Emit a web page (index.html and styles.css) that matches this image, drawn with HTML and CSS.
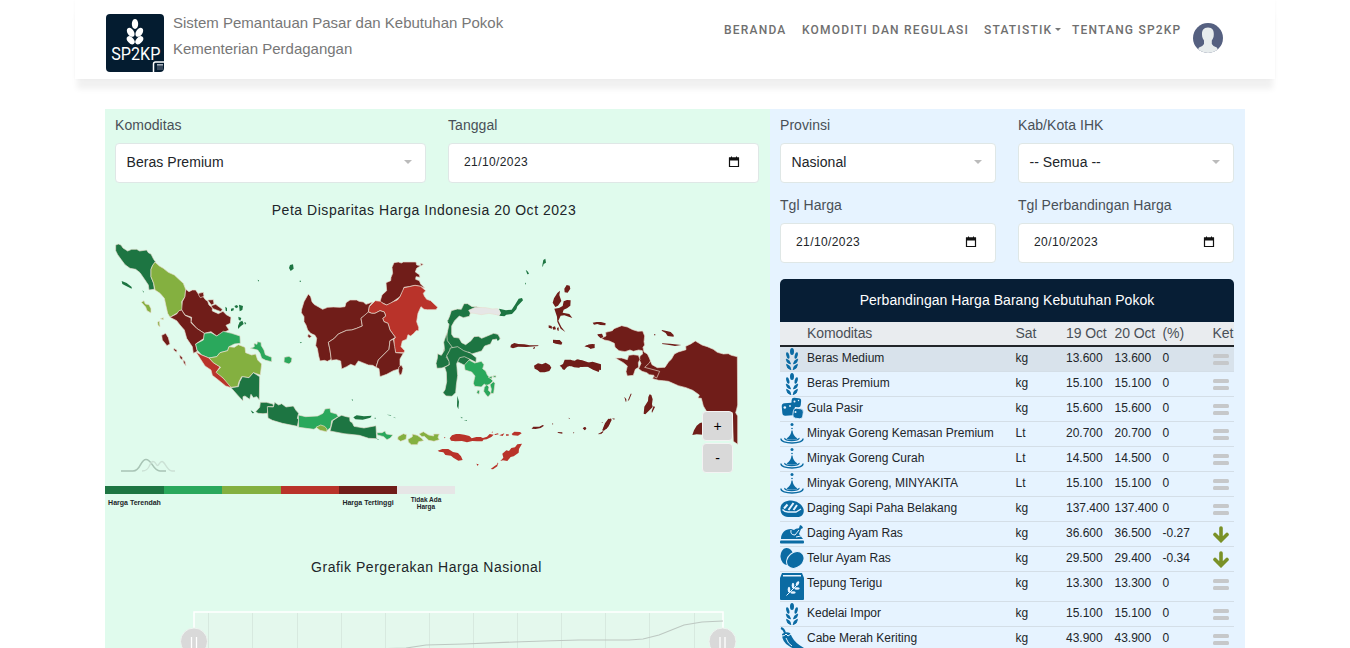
FILE: index.html
```html
<!DOCTYPE html>
<html lang="id">
<head>
<meta charset="utf-8">
<title>SP2KP - Sistem Pemantauan Pasar dan Kebutuhan Pokok</title>
<link rel="stylesheet" href="styles.css">
</head>
<body>
<svg class="defs" width="0" height="0">
  <defs>
    <symbol id="wheat" viewBox="0 0 24 24"><g fill="#0b6ba3"><ellipse cx="12" cy="4.500" rx="2" ry="3.500"/><ellipse cx="7.800" cy="8.500" rx="1.500" ry="3.300" transform="rotate(-14 7.800 8.500)"/><ellipse cx="16.200" cy="8.500" rx="1.500" ry="3.300" transform="rotate(14 16.200 8.500)"/><path d="M6.200 12q4 1 4.300 5-4-.5-4.300-5zM17.800 12q-4 1-4.300 5 4-.5 4.300-5zM6.500 17.300q4 .8 4.400 5.400-4.200-.8-4.400-5.400zM17.500 17.300q-4 .8-4.400 5.400 4.200-.8 4.400-5.400z" stroke="#0b6ba3" stroke-width=".8" stroke-linejoin="round"/></g></symbol>
    <symbol id="sugar" viewBox="0 0 24 24"><g fill="#0b6ba3"><rect x="11.500" y="1" width="9.500" height="9" rx="2.500" transform="rotate(5 16 5)"/><rect x="2" y="6" width="13" height="12.500" rx="3" transform="rotate(-5 8 12)"/><rect x="13" y="11.500" width="10" height="10" rx="3" transform="rotate(8 18 17)" stroke="#e6f3ff" stroke-width=".8"/></g><g fill="#e6f3ff"><circle cx="4.800" cy="10.500" r="1.300"/><circle cx="10" cy="9" r=".9"/><circle cx="14.500" cy="4.500" r="1"/><circle cx="18.500" cy="3.500" r=".7"/><circle cx="15.500" cy="15" r="1"/></g></symbol>
    <symbol id="oil" viewBox="0 0 24 24"><g fill="#0b6ba3"><circle cx="12" cy="2.500" r="1.500"/><circle cx="12" cy="6.500" r=".8"/><path d="M11.500 8.500h1q.5 5.500 5 8-1.500 1.200-5.500 1.200t-5.500-1.200q4.500-2.500 5-8z"/></g><path d="M5 16c-2 3.500 15 3.500 14 0M1 16.500c-1 6 23 6 22 0" fill="none" stroke="#0b6ba3" stroke-width="1.300"/></symbol>
    <symbol id="meat" viewBox="0 0 24 24"><path fill="#0b6ba3" d="M.5 12C0 6 6 3.500 11 3.500S22 7 23.500 12c1 4-1 8-6 8H8C3 19.500 .5 17 .5 12z"/><path d="M2.500 12.500q2 2.500 5.500 2.500h8l5-3" fill="none" stroke="#e6f3ff" stroke-width="1.300"/><path d="M4 11.500l3.500-4M8.500 13l5-7M13.500 13l3.500-5" fill="none" stroke="#e6f3ff" stroke-width="2"/></symbol>
    <symbol id="chicken" viewBox="0 0 24 24"><g fill="#0b6ba3"><path d="M1 17C1 11 5 7 11 7l3 1c2-2 4-1 5-2l1-3 2 1 1 2-2 1-2 5 4 5z"/><rect x="0" y="18.500" width="24" height="3" rx="1"/></g><path d="M11 8q-1 5 4 5l4-5M16 15l5-1" fill="none" stroke="#e6f3ff" stroke-width="1"/></symbol>
    <symbol id="egg" viewBox="0 0 24 24"><ellipse cx="7" cy="9.500" rx="6.500" ry="8.500" transform="rotate(-5 7 9.500)" fill="#0b6ba3"/><ellipse cx="15.300" cy="13" rx="7.500" ry="9.500" transform="rotate(50 15.300 13)" fill="#0b6ba3" stroke="#e6f3ff"/></symbol>
    <symbol id="flour" viewBox="0 0 24 29"><path fill="#0b6ba3" d="M2 1h20l2 5v21q0 1-1 1H1q-1 0-1-1V6z"/><rect x="3" y="3" width="18" height="1.500" fill="#e6f3ff"/><path d="M6.500 23.500L18 12" stroke="#e6f3ff"/><g fill="#e6f3ff"><ellipse cx="17.500" cy="11.500" rx="1.400" ry="2.500" transform="rotate(30 17.500 11.500)"/><ellipse cx="13" cy="13.500" rx="1.300" ry="2.700"/><ellipse cx="17" cy="16.500" rx="2.700" ry="1.300"/><ellipse cx="9" cy="17.500" rx="1.300" ry="2.700"/><ellipse cx="13" cy="20.500" rx="2.700" ry="1.300"/></g></symbol>
    <symbol id="chili" viewBox="0 0 24 24"><path d="M1 1q3 1 4 5" fill="none" stroke="#0b6ba3" stroke-width="2"/><path d="M2 7q4-3 8-1l2 4q3 6 12 11-8 3-15-2Q2 15 2 7z" fill="#0b6ba3"/><path d="M2 9q3 0 4-2l2 2 3-2M6 11q2 6 6 8" fill="none" stroke="#e6f3ff"/></symbol>
    <symbol id="same" viewBox="0 0 16 12"><rect width="16" height="4" rx="1.500" fill="#c6c8ca"/><rect y="7" width="16" height="4" rx="1.500" fill="#c6c8ca"/></symbol>
    <symbol id="down" viewBox="0 0 16 17"><path d="M8 2v12M2 8.500l6 6 6-6" fill="none" stroke="#7a9127" stroke-width="3.600" stroke-linecap="round"/></symbol>
    <symbol id="cal" viewBox="0 0 12 12"><path d="M1.500 2h9v8.500h-9z" fill="none" stroke="#111" stroke-width="1.200"/><path d="M1 1.500h10v3H1zM3 .5h1v2H3zM8 .5h1v2H8z" fill="#111"/></symbol>
  </defs>
</svg>

<header class="topbar">
  <div class="brand">
    <svg class="logo" viewBox="0 0 58 58"><rect width="58" height="58" rx="4" fill="#041c30"/><g fill="#fff"><ellipse cx="29" cy="10" rx="3.200" ry="5"/><ellipse cx="24.700" cy="18.300" rx="3.200" ry="5" transform="rotate(-35 24.700 18.300)"/><ellipse cx="33.300" cy="18.300" rx="3.200" ry="5" transform="rotate(35 33.300 18.300)"/><ellipse cx="24.700" cy="26.200" rx="3" ry="4.800" transform="rotate(-42 24.700 26.200)"/><ellipse cx="33.300" cy="26.200" rx="3" ry="4.800" transform="rotate(42 33.300 26.200)"/></g><text x="5.300" y="46" textLength="49" lengthAdjust="spacingAndGlyphs" class="logo-text">SP2KP</text><path d="M47.500 58v-8q0-2 2-2H58" fill="#041c30" stroke="#fff" stroke-width="1.500"/><path d="M51 50h6v6h-6z" fill="#36475a"/><path d="M51 50h6v1.500h-6z" fill="#a6b0bb"/></svg>
    <div class="brand-name"><div>Sistem Pemantauan Pasar dan Kebutuhan Pokok</div><div>Kementerian Perdagangan</div></div>
  </div>
  <nav class="nav">
    <a class="n1">BERANDA</a><a class="n2">KOMODITI DAN REGULASI</a><a class="n3">STATISTIK<i class="caret"></i></a><a class="n4">TENTANG SP2KP</a>
    <svg class="avatar" viewBox="0 0 30 30"><clipPath id="round"><circle cx="15" cy="15" r="15"/></clipPath><g clip-path="url(#round)"><rect width="30" height="30" fill="#556080"/><path d="M15 4.500c4.500 0 6 3 5.800 7 0 3-1 4.500-2 6v3.500q1 2 5 3.500l3 5.500H3l3-5.500q4-1.500 5-3.500v-3.500c-1-1.500-2-3-2-6-.2-4 1.500-7 6-7z" fill="#e7eced"/></g></svg>
  </nav>
</header>

<main class="panels">
  <section class="left">
    <div class="filters">
      <label class="field">Komoditas<span class="control">Beras Premium<i class="arrow"></i></span></label>
      <label class="field">Tanggal<span class="control date">21/10/2023<svg class="cal"><use href="#cal"/></svg></span></label>
    </div>
    <h2 class="title map-title">Peta Disparitas Harga Indonesia 20 Oct 2023</h2>
    <div class="map-wrap">
      <svg class="map" viewBox="105 230 665 255">
        <g class="land" transform="translate(105 230) scale(.33333)">
          <path class="c1" d="M32 45L40 42 48 45 54 54 68 63 80 58 95 58 104 63 125 60 130 68 138 72 146 88 152 96 143 106 138 118 138 140 146 160 148 178 132 180 130 165 120 150 105 128 92 118 75 115 60 104 48 88 38 74 32 62z"/>
          <path class="c3" d="M150 96L163 108 175 115 190 127 208 135 224 150 235 160 242 178 240 200 230 215 233 238 215 250 195 262 188 250 183 228 178 205 165 190 150 180 146 160 138 140 138 118 143 106z"/>
          <path class="c5" d="M242 178L252 185 262 180 272 180 280 192 293 197 300 208 308 214 312 225 322 233 322 243 340 251 354 244 364 254 378 262 376 280 363 286 372 300 355 308 335 318 318 305 298 310 275 295 258 275 260 262 240 255 230 240 232 215 240 200z"/>
          <path class="c5" d="M195 262L215 252 222 242 230 240 240 256 258 264 258 278 275 295 298 310 297 325 272 342 277 364 265 370 262 350 245 325 238 300 225 285 215 272z"/>
          <path class="c2" d="M298 310L318 308 335 318 355 304 380 310 405 318 406 340 388 342 372 350 368 362 345 368 335 380 312 384 290 375 276 360 272 342 295 330z"/>
          <path class="c4" d="M273 366L290 375 312 384 325 398 345 410 335 425 355 445 375 462 378 473 362 468 340 450 322 436 318 420 300 408 285 385z"/>
          <path class="c3" d="M312 384L335 380 345 368 368 362 372 350 388 352 400 344 420 352 422 368 440 375 452 372 458 390 470 402 466 435 445 428 432 443 410 440 402 455 398 470 378 472 355 445 333 427 347 412 325 398z"/>
          <path class="c1" d="M378 473L400 470 404 455 412 440 432 443 445 428 464 440 463 510 455 500 445 503 438 493 434 508 420 498 414 500 414 513 400 498z"/>
          <path class="c2" d="M436 355L448 350 447 340 456 343 457 335 468 337 469 347 477 360 481 374 500 382 500 395 482 391 470 385 465 370 458 360z"/>
          <path class="c5" d="M281 190l14-3 2 12-11 4-5-8zM308 210l17-1 2 12-8 4zM318 227l14-4 20 15-4 7-24-9zM170 316l12-6 8 13 5 19-9 5-14-17zM207 355l9 6-2 6-8-7zM224 375l8 7v8l-7-5zM234 390l6 4 3 13-7-8z"/>
          <path class="c3" d="M109 217l8-5 4 10 11 2 6 12 0 13-12-7-4-11zM158 276l5-3 2 18-6-5zM166 266l9-3v6z"/>
          <path class="c1 isle" d="M50 153l15 6 15 12v5l-18-9-10-5zM111 181l6 4v3zM361 230l5 4v10l-4-2zM378 236l8-2v7l-8 3zM388 228l8-3 4 6-7 4zM402 224l12 4-2 12-8 4zM400 260l9 4-3 8-5-3zM404 276l8-4 4 10-9 7-8 8v-9zM418 276l6 3-4 5zM458 149l4 2-2 4zM437 541l5 3 6 5-6 1z"/>
        </g>
        <g class="land" transform="translate(230 310) scale(.33333)">
          <path class="c1" d="M77 305l12-13 2-15 18 0 20 5 2 8-17 0-2 20-13 1-15-1z"/>
          <path class="c1" d="M112 290l18 1 4-14 12 8 9-4 13 10 22-3 8 13 8 9-4 15 4 4-4 20-45-9-30-9-13-7z"/>
          <path class="c2" d="M205 315l22 5 36-2 16-8 6-13 15-2 2 12 18 5 5 8-20 12-3 20-13 12-9-4-4-7-14-2-10 7-46-6z"/><path class="c3" d="M258 352l14-7 12 4 7 8-1 8-20-4z"/>
          <path class="c1" d="M302 356l6-24 18-12 9-4 14 4 10 2 1 12 7 4 5 11 30 5 36-7 2 39-24-1-28-9-46-5-42-8z"/>
          <path class="c1 isle" d="M370 322l10-6 22 3 23-2-4 6-23 6-22-1zM365 268l4 1-2 4zM434 323h3v3h-3zM437 385l8 3 2 3zM470 314l12 1 2 2zM488 320l8 3v2z"/>
          <path class="c2" d="M441 368l15 0 9-5 4 9 20 3-9 10-9 4-10-9-19-5zM163 142l14-3 9 6-2 11-7 6-15-5z"/>
          <path class="c3" d="M504 380l16-9 10 3-2 14-16 6-9-6zM534 388l13-8 0-8 15 4 13 9 6 7-15 3-4 9-18 0-9-8zM567 372l13-7 16 10 15 3 0-6 17 0-4 10 4 7-16 5-16-3-13-12-7 1z"/>
        </g>
        <g class="land" transform="translate(290 250) scale(.33333)">
          <path class="c5" d="M55 132L62 140 66 155 72 163 86 171 98 178 113 172 130 171 150 172 165 170 168 158 180 150 200 150 207 154 220 156 228 163 248 156 238 168 235 188 213 205 217 228 200 235 185 240 170 241 145 252 133 265 115 277 120 300 124 328 112 334 103 331 90 333 86 318 82 295 77 287 80 265 75 256 62 250 53 240 48 225 42 215 42 200 34 188 35 178 42 155z"/>
          <path class="c5" d="M312 38L325 36 334 39 340 36 378 36 380 45 392 47 380 55 376 66 388 74 390 82 378 80 377 88 388 92 392 102 404 114 390 109 375 106 358 110 342 112 340 122 330 140 312 153 300 162 290 165 270 155 276 135 290 122 288 98 302 92 303 82 308 70 306 52z"/>
          <path class="c4" d="M235 185L238 170 256 152 272 154 278 160 290 165 312 154 322 150 330 140 342 113 358 110 375 106 392 109 407 122 400 130 403 138 410 148 422 152 443 172 438 179 412 179 402 178 393 170 384 190 380 215 386 232 386 242 378 242 372 250 362 258 354 254 350 268 337 273 333 290 344 302 342 308 317 308 312 290 312 268 316 262 300 240 294 220 282 215 278 205 287 198 283 186 270 182 255 190 245 190z"/>
          <path class="c5" d="M124 331L120 300 115 277 133 265 145 252 170 241 185 240 200 235 217 228 213 205 235 186 245 190 255 190 270 182 283 186 287 198 278 205 282 215 294 220 300 240 316 262 300 272 297 298 280 315 265 330 258 352 248 346 235 345 218 338 205 333 195 348 182 343 170 350 155 357 152 333 140 329z"/>
          <path class="c5" d="M258 352L265 330 280 315 297 298 300 272 310 268 314 290 317 308 340 310 330 327 330 345 334 355 310 362 290 373 270 380 267 356z"/>
          <path class="c5" d="M326 352l8-7 5 10-4 17-6 4-3-11zM55 252l10 7-7 5-5-5zM392 40l8 3-7 5z"/><path class="c1 isle" d="M0 45l9-2 2 13-9 7-5-9zM29 92h4v3h-4zM30 276l6 1-4 3z"/>
        </g>
        <g class="land" transform="translate(425 250) scale(.33333)">
          <path class="c1" d="M68 242l4-18-4-12 6-14 5-16 18-5 12 1 8-17 11 0 13 9 14 0 14 5-10 9-22 3-4 12-18 4-12-5-14 14-9 16 0 25 6 9 16 2 8 14 12 6 16-12 9-12 13-1 10 6 24-10 12-5 13 3 7 13-25 3-4 13-18 6-9 15-30 9-9-6-6 8 12 20 18 8 13 26-13-8-18-4-24-13-16-8-10-4-14 4-14-16-4-12z"/>
          <path class="c1" d="M65 250l2 22 15 20-7 16-11 14 11 14-4 10-20 8-15 1-3-15 4-15 1-14 11 5 10-16-3-23z"/>
          <path class="c1" d="M76 294l22-4 18 12 20 7 18 14-1 14-20-10-15-7-14 3-9 18 3 36-4 28-2 23-11 11-18-1-9-10 6-9 5-24-1-28-5-15 14-8-1-10-7-17 9-16z"/>
          <path class="c2" d="M118 345l14-15 17 9 20-5 8 10-4 12 9 7 5 12 17 18-9 9-11 5-6-5-9 9-20-2-4-9 5-22-10-12-20-6z"/>
          <path class="c2" d="M178 412l7-8 7 7-2 10 9 8-10 12-7-8-6-9zM195 404l10-9 5 5-4 30-9 1 2-14zM190 382l12-4-2 9zM205 377h8v5h-8zM158 420l6 2-2 11-7-4z"/>
          <path class="c0" d="M131 181l20-9 32 1 18 4 17-1 6 5 3 17-13-4-22-4-23 4-21-4-12-1z"/>
          <path class="c1 isle" d="M222 176l21 5 17-2 10-15 11-18 10-2 3 7-17 18-3 9-13 14-17 2-6 5-15-2 5-8zM302 59l7 6 3 7-5 1zM355 30l6-4 2 12-7 4-3 10-1-6zM300 98l3 1-2 6zM200 262l12-1-2 5-8 2-5 10-3-5zM215 263h8v7l-6 2zM97 437l5 18-2 23-4-10zM68 210l5 8-4 2z"/>
          <path class="c5 isle" d="M418 116l7-11 9 2 2 9-8 12-9-1zM387 145l10-16 8-7-2 13 6 18-10 14-8 4-8-13zM388 176l14-2 11-6 3-14 10-4 11 1-1 16-10 8-10 4-3 9 20 4 9 12-24-8-11 1-7 15 9 19 12 15-14-10-10-21-1-15zM371 226l9 2 1 8-10-3zM382 232l8-3 3 9-8 1zM396 234l5-2v11l-4-2zM384 269l12 1 8 0 8 8-3 6-17-3-8-3zM258 284l10-5 12 3 18 1 16 3 25 0 2 2-37 3-25-1-15 5-8-3zM327 291l3 0-2 6-4-1zM327 347l12-7 12 3 11-5 12 7 5 8-6 10-14 4-14 0-8-7-8-4zM478 289l12-5 19-2v12l-12 2-5-5zM404 347l10-5 5-13 19 0 7 8 11-9 20 4 10 6 17-3 25 8v17l-25-4-12-6-18-3-11 6-15-1-10-5-10 3-9 10-5-2-4-7z"/>
        </g>
        <g class="land" transform="translate(570 280) scale(.33333)">
          <path class="c5" d="M94 175L108 168 107 157 127 152 132 146 155 137 172 141 188 149 204 154 218 153 224 168 222 185 224 195 219 202 222 216 232 222 238 234 246 254 262 263 285 262 296 245 304 238 313 222 325 216 348 209 347 199 362 192 376 183 396 195 412 200 430 208 442 217 460 222 475 221 484 226 502 230 503 375 500 388 497 398 503 408 503 493 490 484 487 398 412 398 400 378 394 355 384 354 388 345 368 331 348 323 325 317 295 304 280 302 266 301 248 296 252 286 238 284 230 278 216 274 206 266 213 250 208 240 210 228 218 222 217 212 206 210 190 214 180 210 165 215 147 212 135 202 133 190 118 183 103 180z"/>
          <path class="c5" d="M137 234L155 234 172 239 176 226 190 224 205 226 210 238 205 248 206 262 196 268 190 286 172 288 168 275 172 258 160 248 146 240z"/>
          <path class="c5 isle" d="M223 380l11-17 1-12 4-8 5 2 4 13-2 14 2 9-12 12-10 10-5-2zM245 393l6-15 4 3-9 18zM367 465l5-14 8-14 10-8 10-2v37l-20-1zM97 449l7-14 12-15 7-5 2 5-10 20-11 11-6 1zM84 462l11-6 7-5-7 9-8 3zM45 199l10-5 14-2 2 8-9 6-8-4zM68 128l12-2 13 0 14 4-1 6-15-1-9-3-10 2zM82 163l14-2 4 10-8 4-8-8zM276 150l17 4 9 2 9 9v5l-18-2-6-9-12-7zM277 190l23 1 34 4-19 3-22-4-17-2zM0 240l15 2 11-3 24 6 19 9 8-1 12 15-3 8-17-7-16-9-18 1-18-3-17 1zM40 443l5-2 4 5-6 3zM163 350l6 8 0 6 4-1 9-22 3 0-8 20-10 4zM252 163h4v3h-4z"/>
          <path d="M243 240l-5 9-14 13 45 12-9 20-11-6" fill="none"/>
        </g>
        <g class="land" transform="translate(380 400) scale(.33333)">
          <path class="c4 isle" d="M209 115l7-9 12-4 11 0 14 2 15 4 7 7 14-4 13 0 11 5-6 8-16 0-14-1-16 4-15-4-20 1-13-2zM309 114l12-4 8-8 12 2-7 7-14 7-12 1zM335 97l3-3-1 6zM343 103l11-3 2 3-11 2zM358 106l15-6-5 8zM378 103h8v4h-8zM395 102l8-7 17 1 5 4-11 7-16-1zM173 152l14-5 18 0 14 9 15 3 9 10 5 11-13 2-15-9-7-6-17-2-6-8-12-2zM361 183l9-10-3-12 12-10 8 2 7-9 11-2 7-9 14-2-9 16-1 11-15 11-9 2-10 12-13-2zM332 207l12-9 9-6-1 7-13 9zM289 191l7 2-3 5zM352 188l3 1-3 8zM192 111l5 2-4 2z"/>
          <path class="c5 isle" d="M454 87l6-7 18 0 10-5 4 2-10 7-15 3-12-1zM517 69l3 3-3 2zM532 96l15 1v4l-12-2zM566 53l4 2-3 2zM608 85l8-4 3 5-5 5zM671 80l4-10 10-14 7 1-4 16-9 14-9-1zM659 103l7-7 5-1-8 7zM579 97l5 2-5 1zM696 55l9 1-3 3zM665 66l5 1-4 1z"/>
          <path class="c1 isle" d="M241 50l8 4-4 1zM251 60h10v2z"/>
        </g>
        <path d="M121 471h12c8 0 7-11.500 13-11.500s7 11.500 14 11.500h6" fill="none" stroke="#a8c4b5" stroke-width="1.600"/><path d="M142 471c9 0 7-9.500 11-9.500 3 0 3 4 4.500 4s2-4 4.500-4c3 0 5 9.500 10 9.500h3" fill="none" stroke="#cbe1d5" stroke-width="1.400"/>
      </svg>
      <div class="zoom"><button>+</button><button>-</button></div>
    </div>
    <div class="legend">
      <span class="l1"><b>Harga Terendah</b></span><span class="l2"></span><span class="l3"></span><span class="l4"></span><span class="l5"><b>Harga Tertinggi</b></span><span class="l6"><b>Tidak Ada Harga</b></span>
    </div>
    <h2 class="title chart-title">Grafik Pergerakan Harga Nasional</h2>
    <svg class="chart" viewBox="105 605 665 43"><path d="M194 612h529v40H194z" fill="#e4f8ed" stroke="#fff" stroke-width="1.500"/><path d="M208.500 613v35M252.500 613v35M297.500 613v35M341.500 613v35M385.500 613v35M429.500 613v35M473.500 613v35M517.500 613v35M561.500 613v35M605.500 613v35M649.500 613v35M694.500 613v35" stroke="#d7e9df"/><path d="M375 649l31-1 20-3 38-1 50-2 30-1 35-1h50l14-1 16-4 25-10 18-3 21-1" fill="none" stroke="#bdc8c2" stroke-width="1.200"/><g fill="#d9d9d9" stroke="#eef5f1"><circle cx="194" cy="641.500" r="13.500"/><circle cx="722.500" cy="641.500" r="13.500"/></g><path d="M191.500 637v12M196.500 637v12M720 637v12M725 637v12" stroke="#fff" stroke-width="1.300"/></svg>
  </section>

  <section class="right">
    <div class="filters">
      <label class="field">Provinsi<span class="control">Nasional<i class="arrow"></i></span></label>
      <label class="field">Kab/Kota IHK<span class="control">-- Semua --<i class="arrow"></i></span></label>
      <label class="field">Tgl Harga<span class="control date">21/10/2023<svg class="cal"><use href="#cal"/></svg></span></label>
      <label class="field">Tgl Perbandingan Harga<span class="control date">20/10/2023<svg class="cal"><use href="#cal"/></svg></span></label>
    </div>
    <div class="card-head">Perbandingan Harga Barang Kebutuhan Pokok</div>
    <div class="table">
      <div class="row head"><span></span><span>Komoditas</span><span>Sat</span><span>19 Oct</span><span>20 Oct</span><span>(%)</span><span>Ket</span></div>
      <div class="row active"><svg class="ic"><use href="#wheat"/></svg><span>Beras Medium</span><span>kg</span><span>13.600</span><span>13.600</span><span>0</span><svg class="eq"><use href="#same"/></svg></div>
      <div class="row"><svg class="ic"><use href="#wheat"/></svg><span>Beras Premium</span><span>kg</span><span>15.100</span><span>15.100</span><span>0</span><svg class="eq"><use href="#same"/></svg></div>
      <div class="row"><svg class="ic"><use href="#sugar"/></svg><span>Gula Pasir</span><span>kg</span><span>15.600</span><span>15.600</span><span>0</span><svg class="eq"><use href="#same"/></svg></div>
      <div class="row"><svg class="ic"><use href="#oil"/></svg><span>Minyak Goreng Kemasan Premium</span><span>Lt</span><span>20.700</span><span>20.700</span><span>0</span><svg class="eq"><use href="#same"/></svg></div>
      <div class="row"><svg class="ic"><use href="#oil"/></svg><span>Minyak Goreng Curah</span><span>Lt</span><span>14.500</span><span>14.500</span><span>0</span><svg class="eq"><use href="#same"/></svg></div>
      <div class="row"><svg class="ic"><use href="#oil"/></svg><span>Minyak Goreng, MINYAKITA</span><span>Lt</span><span>15.100</span><span>15.100</span><span>0</span><svg class="eq"><use href="#same"/></svg></div>
      <div class="row"><svg class="ic"><use href="#meat"/></svg><span>Daging Sapi Paha Belakang</span><span>kg</span><span>137.400</span><span>137.400</span><span>0</span><svg class="eq"><use href="#same"/></svg></div>
      <div class="row"><svg class="ic"><use href="#chicken"/></svg><span>Daging Ayam Ras</span><span>kg</span><span>36.600</span><span>36.500</span><span>-0.27</span><svg class="dn"><use href="#down"/></svg></div>
      <div class="row"><svg class="ic"><use href="#egg"/></svg><span>Telur Ayam Ras</span><span>kg</span><span>29.500</span><span>29.400</span><span>-0.34</span><svg class="dn"><use href="#down"/></svg></div>
      <div class="row tall"><svg class="ic"><use href="#flour"/></svg><span>Tepung Terigu</span><span>kg</span><span>13.300</span><span>13.300</span><span>0</span><svg class="eq"><use href="#same"/></svg></div>
      <div class="row"><svg class="ic"><use href="#wheat"/></svg><span>Kedelai Impor</span><span>kg</span><span>15.100</span><span>15.100</span><span>0</span><svg class="eq"><use href="#same"/></svg></div>
      <div class="row"><svg class="ic"><use href="#chili"/></svg><span>Cabe Merah Keriting</span><span>kg</span><span>43.900</span><span>43.900</span><span>0</span><svg class="eq"><use href="#same"/></svg></div>
    </div>
  </section>
</main>
</body>
</html>
```
FILE: styles.css
```css
* { box-sizing: border-box; }
body { margin: 0; height: 648px; overflow: hidden; background: #fff; font-family: "Liberation Sans", Arial, sans-serif; font-size: 14px; color: #212529; }
.defs { position: absolute; }
svg { display: block; }

.topbar { width: 1200px; height: 79px; margin: 0 auto; padding: 0 52px 0 31px; display: flex; justify-content: space-between; background: #fff; box-shadow: 0 12px 6px -2px rgba(0, 0, 0, .06), 0 0 3px rgba(0, 0, 0, .03); }
.brand { display: flex; gap: 9px; padding-top: 14px; }
.logo { width: 58px; height: 58px; overflow: visible; }
.logo-text { font: 18.5px Roboto, sans-serif; fill: #fff; }
.brand-name { margin-top: -4px; font-size: 15px; line-height: 26px; color: #777; white-space: nowrap; }
.nav { display: flex; padding-top: 23px; font-family: Roboto, sans-serif; font-size: 12px; font-weight: 500; line-height: 14px; letter-spacing: 1.2px; color: #6f6f6f; white-space: nowrap; }
.n1 { width: 78px; }
.n2 { width: 182px; }
.n3 { width: 88px; }
.n4 { width: 121px; }
.caret { display: inline-block; margin-left: 3px; vertical-align: 3px; border: 3px solid transparent; border-top-color: #777; border-bottom: 0; }
.avatar { width: 30px; height: 30px; }

.panels { width: 1140px; height: 539px; margin: 30px auto 0; display: flex; }
.left { width: 665px; background: #e0fbed; }
.right { width: 475px; padding: 0 11px 0 10px; background: #e6f3ff; }
.filters { display: grid; gap: 4px 22px; padding-top: 9px; color: #495057; }
.left .filters { grid-template-columns: 311px 311px; height: 85px; padding-left: 10px; }
.right .filters { grid-template-columns: 216px 216px; }
.field { height: 76px; line-height: 15px; letter-spacing: .05px; }
.control { display: flex; align-items: center; justify-content: space-between; height: 40px; margin-top: 10px; padding: 0 13px 2px 10.500px; border: 1px solid #dfe7e6; border-radius: 4px; background: #fff; color: #212529; }
.date { padding: 0 18px 2px 15px; font-size: 12px; letter-spacing: .4px; }
.arrow { border: 4.500px solid transparent; border-top-color: #bbb; border-bottom: 0; }
.cal { width: 12px; height: 12px; }

.title { margin: 0; font-size: 14px; font-weight: 400; line-height: 16px; letter-spacing: .53px; text-align: center; }
.map-title { height: 36px; padding: 8px 27px 0 0; }
.map-wrap { position: relative; height: 255px; }
.map { width: 665px; height: 255px; }
.land { stroke: #e8ded0; stroke-width: 2; stroke-linejoin: round; }
.land .isle { stroke: none; }
.c0 { fill: #e6e6e6; }
.c1 { fill: #1d7542; }
.c2 { fill: #2aa85c; }
.c3 { fill: #84b040; }
.c4 { fill: #b9332a; }
.c5 { fill: #701d19; }
.zoom { position: absolute; left: 597px; top: 181px; display: grid; gap: 2px; }
.zoom button { width: 31px; height: 30px; padding: 0; border: 1px solid #f3f3f3; border-radius: 4px; background: #d9d9d9; color: #000; font: 14px "Liberation Sans", sans-serif; }

.legend { display: grid; grid-template-columns: 59px 58px 59px 58px 58px 58px; height: 30px; padding-top: 1px; }
.legend span { height: 8px; }
.legend b { display: block; padding-top: 13px; font-size: 7px; line-height: 7px; text-align: center; white-space: nowrap; }
.l1 { background: #1d7542; }
.l2 { background: #2aa85c; }
.l3 { background: #84b040; }
.l4 { background: #b9332a; }
.l5 { background: #701d19; }
.l6 { background: #e6e6e6; }
.legend .l6 b { padding: 10px 12px 0; white-space: normal; font-size: 6.500px; }
.chart-title { height: 90px; padding: 44px 22px 0 0; }
.chart { width: 665px; height: 43px; }

.card-head { height: 43px; margin-top: 5px; border-radius: 5px 5px 0 0; background: #071e35; color: #fff; font-size: 14px; line-height: 42px; letter-spacing: .05px; text-align: center; }
.row { display: grid; grid-template-columns: 27px 208.500px 50.500px 48.500px 48px 50px 21.500px; height: 25px; border-bottom: 1px solid #d4dee7; font-size: 12px; line-height: 22px; white-space: nowrap; }
.row.head { border-bottom: 2px solid #212529; background: #e9ecef; color: #495057; font-size: 14px; letter-spacing: -.1px; }
.row.active { background: #d8e2eb; }
.row.tall { height: 30px; }
.ic { width: 24px; height: 24px; }
.tall .ic { height: 29px; }
.eq { width: 16px; height: 12px; margin-top: 7px; }
.dn { width: 16px; height: 17px; margin-top: 4px; }
```
